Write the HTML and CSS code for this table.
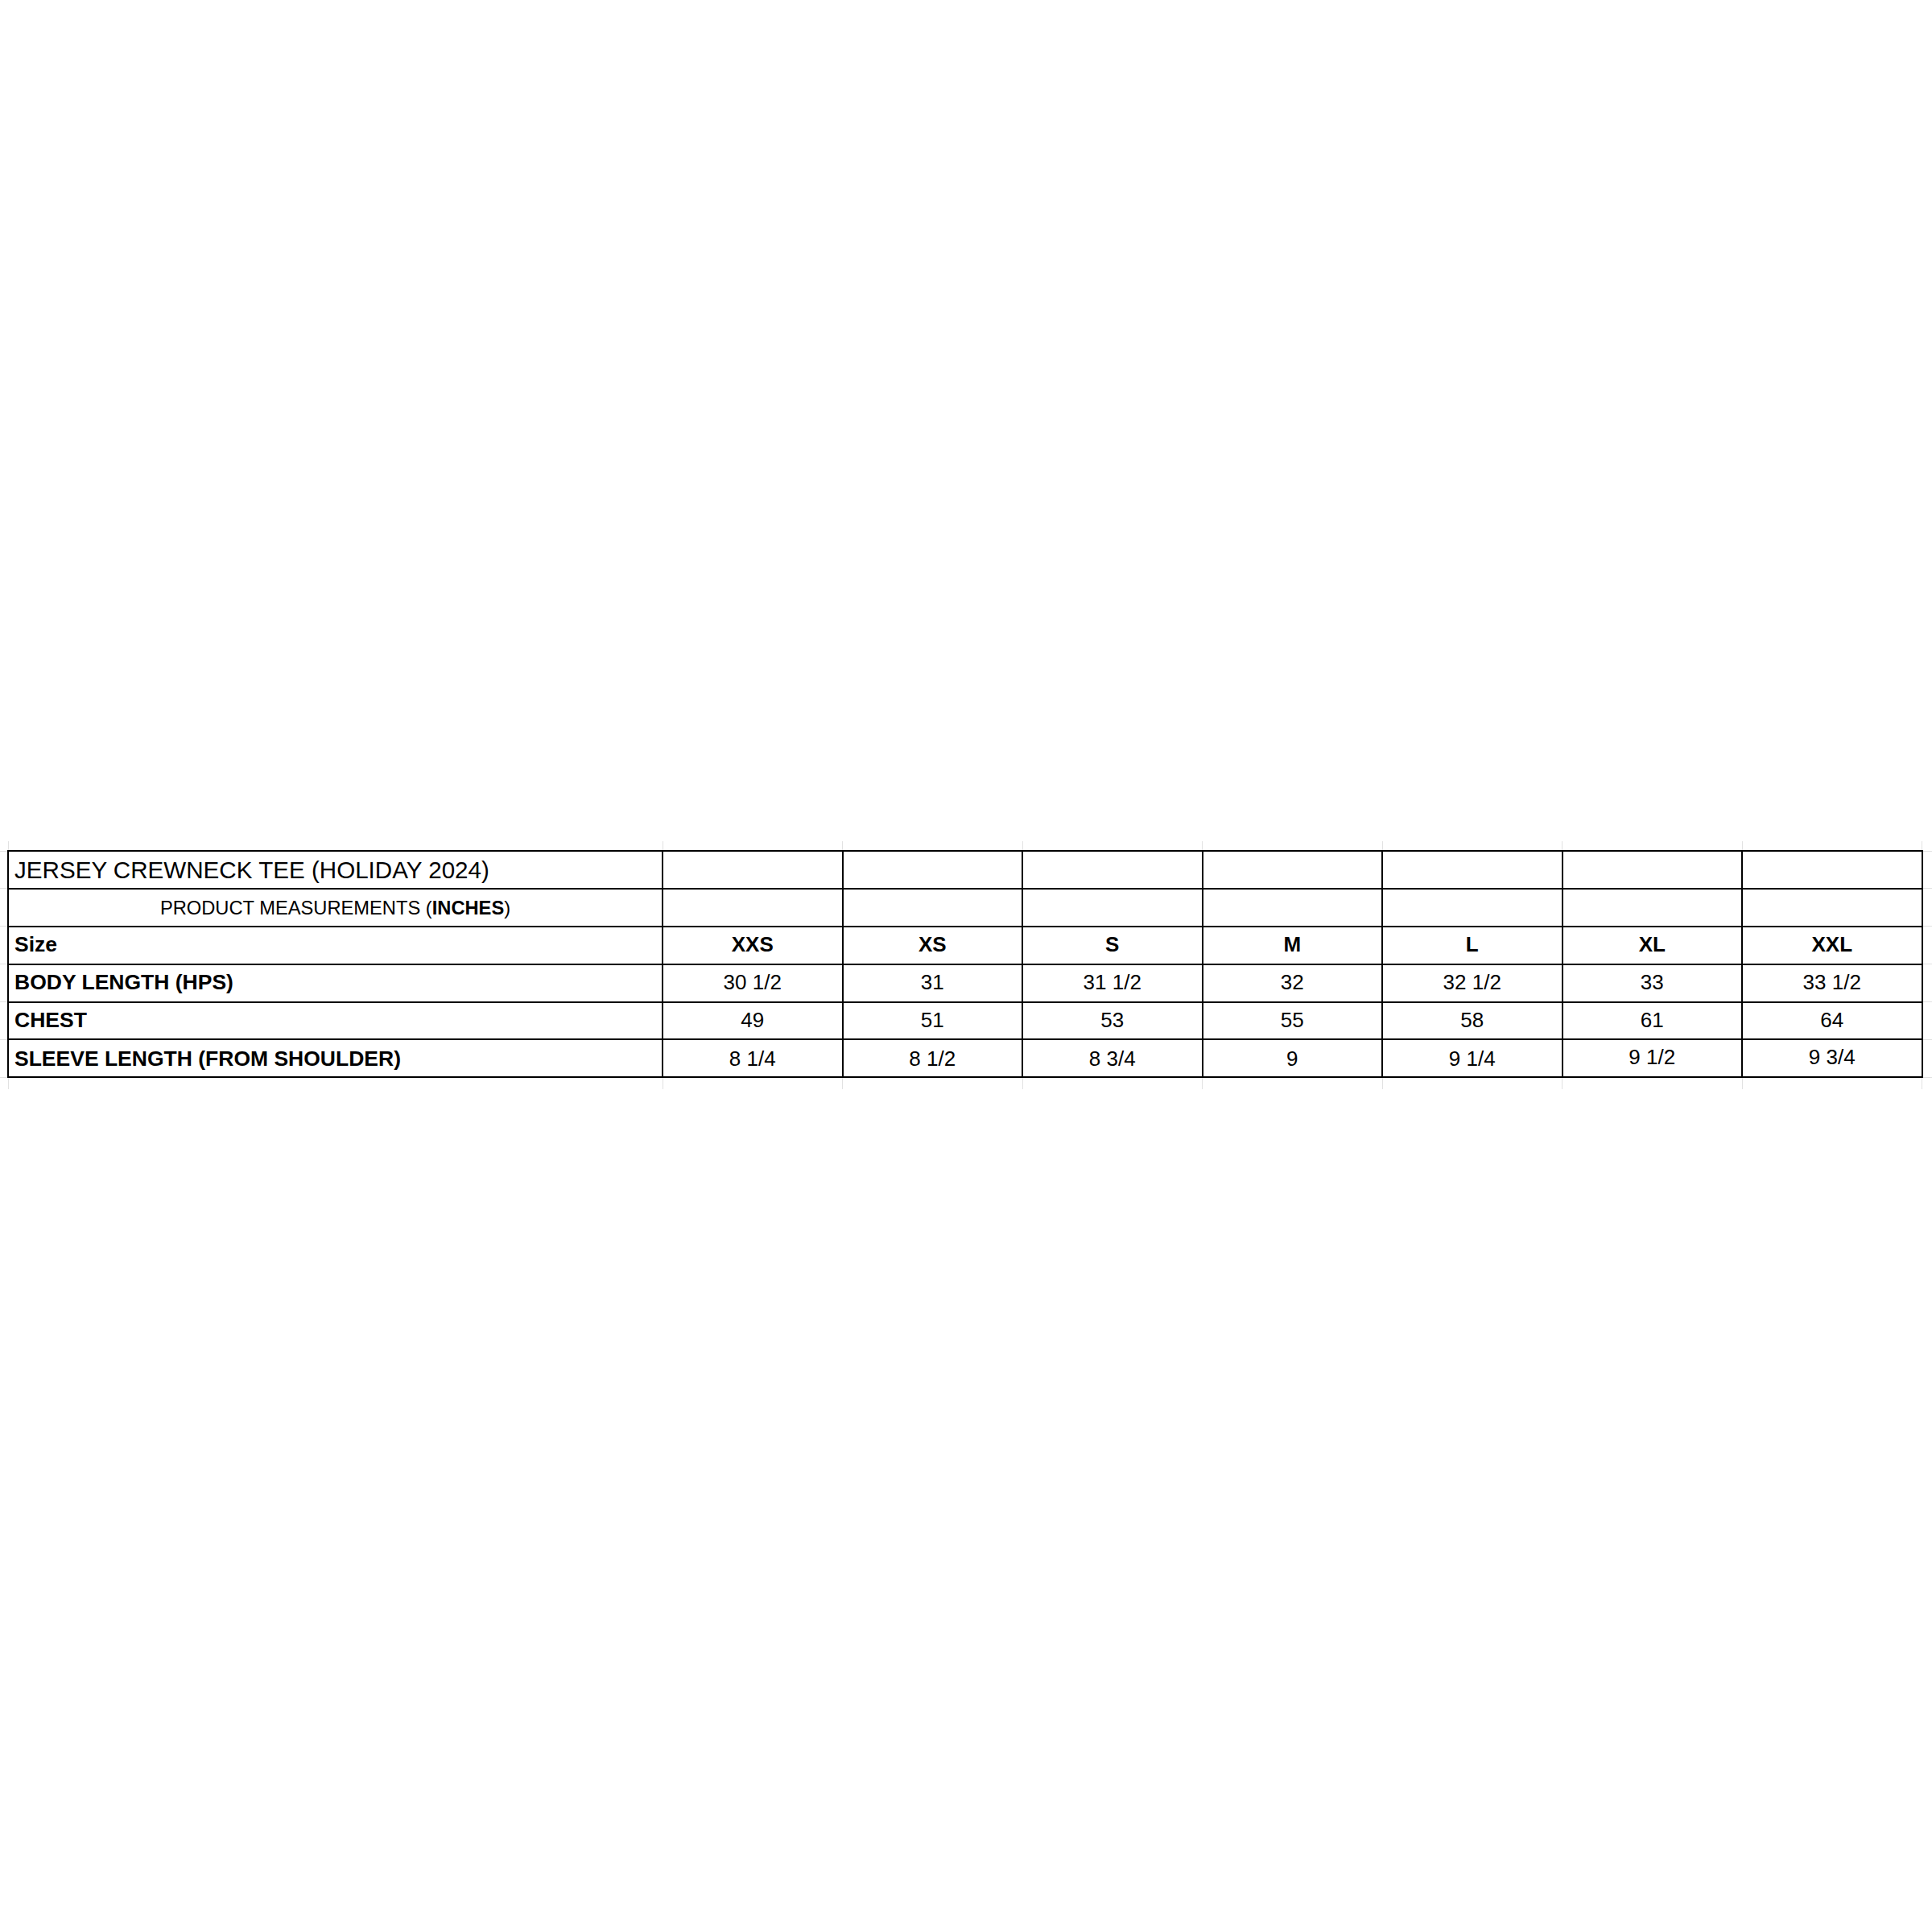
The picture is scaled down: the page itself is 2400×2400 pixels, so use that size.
FILE: index.html
```html
<!DOCTYPE html>
<html>
<head>
<meta charset="utf-8">
<title>Jersey Crewneck Tee - Size Chart</title>
<link rel="stylesheet" href="styles.css">
</head>
<body>
<table class="sheet">
  <colgroup>
    <col class="c-gl">
    <col class="c-label">
    <col class="c-val"><col class="c-val"><col class="c-val"><col class="c-val"><col class="c-val"><col class="c-val"><col class="c-val">
    <col class="c-gr">
  </colgroup>
  <tr class="ghost-top">
    <td class="g-corner"></td><td></td><td></td><td></td><td></td><td></td><td></td><td></td><td></td><td class="g-corner"></td>
  </tr>
  <tr class="row">
    <td class="gl"></td>
    <td class="cell title">JERSEY CREWNECK TEE (HOLIDAY 2024)</td>
    <td class="cell"></td><td class="cell"></td><td class="cell"></td><td class="cell"></td><td class="cell"></td><td class="cell"></td><td class="cell"></td>
    <td class="gr"></td>
  </tr>
  <tr class="row">
    <td class="gl"></td>
    <td class="cell subtitle">PRODUCT MEASUREMENTS (<b>INCHES</b>)</td>
    <td class="cell"></td><td class="cell"></td><td class="cell"></td><td class="cell"></td><td class="cell"></td><td class="cell"></td><td class="cell"></td>
    <td class="gr"></td>
  </tr>
  <tr class="row">
    <td class="gl"></td>
    <td class="cell label">Size</td>
    <td class="cell val bold">XXS</td><td class="cell val bold">XS</td><td class="cell val bold">S</td><td class="cell val bold">M</td><td class="cell val bold">L</td><td class="cell val bold">XL</td><td class="cell val bold">XXL</td>
    <td class="gr"></td>
  </tr>
  <tr class="row">
    <td class="gl"></td>
    <td class="cell label">BODY LENGTH (HPS)</td>
    <td class="cell val">30 1/2</td><td class="cell val">31</td><td class="cell val">31 1/2</td><td class="cell val">32</td><td class="cell val">32 1/2</td><td class="cell val">33</td><td class="cell val">33 1/2</td>
    <td class="gr"></td>
  </tr>
  <tr class="row">
    <td class="gl"></td>
    <td class="cell label">CHEST</td>
    <td class="cell val">49</td><td class="cell val">51</td><td class="cell val">53</td><td class="cell val">55</td><td class="cell val">58</td><td class="cell val">61</td><td class="cell val">64</td>
    <td class="gr"></td>
  </tr>
  <tr class="row last">
    <td class="gl"></td>
    <td class="cell label">SLEEVE LENGTH (FROM SHOULDER)</td>
    <td class="cell val">8 1/4</td><td class="cell val">8 1/2</td><td class="cell val">8 3/4</td><td class="cell val">9</td><td class="cell val">9 1/4</td><td class="cell val up">9 1/2</td><td class="cell val up">9 3/4</td>
    <td class="gr"></td>
  </tr>
  <tr class="ghost-bottom">
    <td class="g-corner"></td><td></td><td></td><td></td><td></td><td></td><td></td><td></td><td></td><td class="g-corner"></td>
  </tr>
</table>
</body>
</html>
```

FILE: styles.css
```css
html, body {
  margin: 0;
  padding: 0;
  background: #ffffff;
}

body {
  font-family: "Liberation Sans", Arial, sans-serif;
  color: #000000;
  padding-top: 1045px;
}

.sheet {
  border-collapse: collapse;
  table-layout: fixed;
  width: 2400px;
}

.c-gl { width: 10px; }
.c-label { width: 813px; }
.c-val { width: 223.5px; }
.c-gr { width: 12.5px; }

td {
  padding: 0;
  white-space: nowrap;
  overflow: hidden;
}

.ghost-top { height: 12px; }
.ghost-bottom { height: 15px; }

.ghost-top td,
.ghost-bottom td {
  border-left: 1px solid #e2e2e2;
  border-right: 1px solid #e2e2e2;
}
.ghost-top td.g-corner,
.ghost-bottom td.g-corner {
  border-left: none;
  border-right: none;
}
.ghost-top td:nth-child(2),
.ghost-bottom td:nth-child(2) { border-left: 1px solid #e2e2e2; }
.ghost-top td:nth-child(9),
.ghost-bottom td:nth-child(9) { border-right: 1px solid #e2e2e2; }

.row { height: 46.9px; }

.gl, .gr {
  border-top: 1px solid #e2e2e2;
  border-bottom: 1px solid #e2e2e2;
}

.cell {
  border: 2px solid #000000;
  font-size: 26px;
  line-height: 30px;
  vertical-align: middle;
  padding-bottom: 3px;
}

.title {
  font-size: 29.6px;
  padding-left: 7px;
  padding-top: 4px;
  padding-bottom: 3px;
}

.subtitle {
  font-size: 23.7px;
  text-align: center;
  padding-top: 4px;
  padding-bottom: 3px;
  padding-left: 0;
}

.label {
  font-weight: bold;
  font-size: 26.5px;
  padding-left: 7px;
}

.last .cell {
  padding-top: 4px;
  padding-bottom: 3px;
}

.val {
  text-align: center;
}

.bold {
  font-weight: bold;
}

.last .up {
  padding-top: 0;
}
```
